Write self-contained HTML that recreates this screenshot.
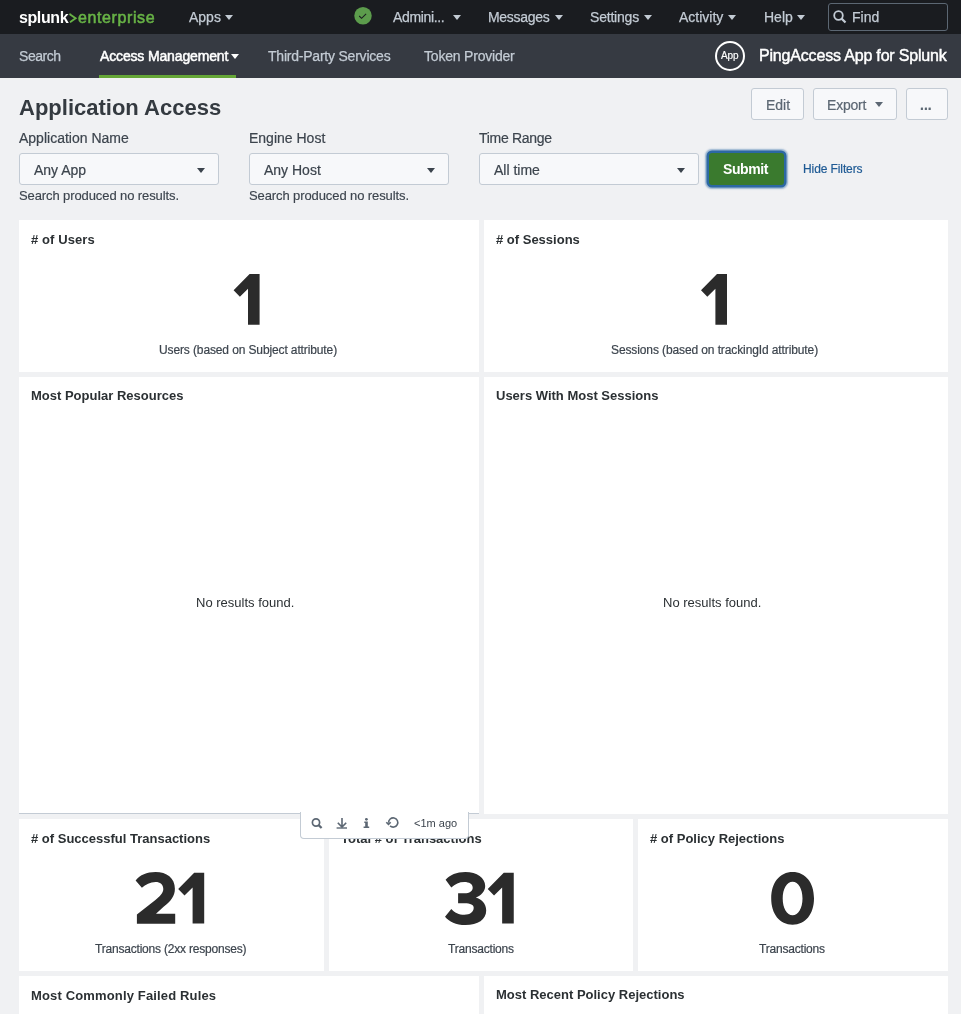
<!DOCTYPE html>
<html><head><meta charset="utf-8">
<style>
html,body{margin:0;padding:0;}
body{width:961px;height:1014px;overflow:hidden;position:relative;background:#f0f1f3;font-family:"Liberation Sans",sans-serif;}
.a{position:absolute;}
.t{position:absolute;line-height:1;white-space:nowrap;}
.t,.ptitle,.cap,.lbl{will-change:transform;}
#top{left:0;top:0;width:961px;height:34px;background:#1a1c20;}
#bar{left:0;top:34px;width:961px;height:44px;background:#363a42;}
.nv{color:#c3cbd4;font-size:14px;-webkit-text-stroke:0.25px #c3cbd4;}
.tri{position:absolute;width:0;height:0;border-left:4px solid transparent;border-right:4px solid transparent;border-top:5px solid #c3cbd4;}
.panel{position:absolute;background:#fff;}
.ptitle{position:absolute;font-weight:bold;font-size:13px;color:#2b3033;line-height:1;white-space:nowrap;}
.cap{position:absolute;font-size:12px;color:#3c444d;line-height:1;white-space:nowrap;-webkit-text-stroke:0.2px #3c444d;}
.btn{position:absolute;box-sizing:border-box;border:1px solid #c3cbd4;border-radius:3px;background:#f7f8fa;}
.dd{position:absolute;box-sizing:border-box;border:1px solid #c3cbd4;border-radius:3px;background:#f7f8fa;}
.lbl{position:absolute;line-height:1;white-space:nowrap;font-size:14px;color:#3c444d;-webkit-text-stroke:0.2px currentColor;}
</style></head><body>
<div id="top" class="a"></div>
<div id="bar" class="a"></div>

<!-- logo -->
<div class="t" style="left:19px;top:10px;font-size:16px;font-weight:bold;color:#fff;letter-spacing:-0.4px;">splunk</div>
<svg class="a" style="left:68px;top:13px;" width="10" height="12" viewBox="0 0 10 12"><path d="M2.2 0.5 L2.2 1.6 L7.6 5.3 L2 9.2" fill="none" stroke="#68b346" stroke-width="1.9"/></svg>
<div class="t" style="left:77.5px;top:10px;font-size:16px;letter-spacing:0.6px;color:#68b346;-webkit-text-stroke:0.55px #68b346;">enterprise</div>

<div class="t nv" style="left:189px;top:10px;">Apps</div>
<div class="tri" style="left:225px;top:15px;"></div>

<svg class="a" style="left:354px;top:7px;" width="18" height="18" viewBox="0 0 18 18"><circle cx="9" cy="8.75" r="8.75" fill="#5c9c4c"/><path d="M5.2 9 L7.6 11.3 L12.1 6.9" fill="none" stroke="#1a1c20" stroke-width="1.05"/></svg>

<div class="t nv" style="left:393px;top:10px;letter-spacing:-0.35px;">Admini...</div>
<div class="tri" style="left:453px;top:15px;"></div>
<div class="t nv" style="left:488px;top:10px;letter-spacing:-0.3px;">Messages</div>
<div class="tri" style="left:555px;top:15px;"></div>
<div class="t nv" style="left:590px;top:10px;letter-spacing:-0.2px;">Settings</div>
<div class="tri" style="left:644px;top:15px;"></div>
<div class="t nv" style="left:679px;top:10px;">Activity</div>
<div class="tri" style="left:728px;top:15px;"></div>
<div class="t nv" style="left:764px;top:10px;">Help</div>
<div class="tri" style="left:797px;top:15px;"></div>

<div class="a" style="left:828px;top:3px;width:118px;height:26px;border:1px solid #5c6773;border-radius:3px;"></div>
<svg class="a" style="left:832px;top:9px;" width="16" height="16" viewBox="0 0 16 16"><circle cx="6.5" cy="6.5" r="4.3" fill="none" stroke="#c3cbd4" stroke-width="1.8"/><path d="M9.6 9.6 L13.5 13.5" stroke="#c3cbd4" stroke-width="2.2"/></svg>
<div class="t nv" style="left:852px;top:10px;">Find</div>

<!-- app bar -->
<div class="t nv" style="left:19px;top:49px;letter-spacing:-0.45px;">Search</div>
<div class="t" style="left:100px;top:49px;font-size:14px;letter-spacing:-0.15px;color:#fff;-webkit-text-stroke:0.5px #fff;">Access Management</div>
<div class="tri" style="left:231px;top:54px;border-top-color:#fff;"></div>
<div class="a" style="left:99px;top:75px;width:137px;height:3px;background:#65a637;"></div>
<div class="t nv" style="left:268px;top:49px;letter-spacing:-0.22px;">Third-Party Services</div>
<div class="t nv" style="left:424px;top:49px;letter-spacing:-0.2px;">Token Provider</div>
<div class="a" style="left:715px;top:41px;width:26px;height:26px;border:2px solid #fff;border-radius:50%;"></div>
<div class="t" style="left:721px;top:50.5px;font-size:10px;letter-spacing:-0.1px;color:#fff;-webkit-text-stroke:0.15px #fff;">App</div>
<div class="t" style="left:759px;top:48px;font-size:16px;letter-spacing:-0.18px;color:#fff;-webkit-text-stroke:0.45px #fff;">PingAccess App for Splunk</div>

<!-- title & filters -->
<div class="t" style="left:19px;top:97px;font-size:22px;font-weight:bold;color:#343a40;">Application Access</div>
<div class="btn" style="left:751px;top:88px;width:53px;height:32px;"></div>
<div class="lbl" style="left:765.5px;top:97.5px;color:#5c6773;-webkit-text-stroke:0.2px #5c6773;">Edit</div>
<div class="btn" style="left:813px;top:88px;width:84px;height:32px;"></div>
<div class="lbl" style="left:827px;top:97.5px;letter-spacing:-0.2px;color:#5c6773;-webkit-text-stroke:0.2px #5c6773;">Export</div>
<div class="tri" style="left:875px;top:102px;border-top-color:#5c6773;"></div>
<div class="btn" style="left:906px;top:88px;width:42px;height:32px;"></div>
<div class="lbl" style="left:920px;top:97.5px;color:#5c6773;font-weight:bold;">...</div>

<div class="lbl" style="left:19px;top:131px;">Application Name</div>
<div class="dd" style="left:19px;top:153px;width:200px;height:32px;"></div>
<div class="lbl" style="left:34px;top:162.5px;">Any App</div>
<div class="tri" style="left:197px;top:167.5px;border-top-color:#3c444d;"></div>
<div class="t" style="left:19px;top:188.5px;font-size:13px;letter-spacing:-0.1px;color:#3c444d;-webkit-text-stroke:0.15px #3c444d;">Search produced no results.</div>

<div class="lbl" style="left:249px;top:131px;">Engine Host</div>
<div class="dd" style="left:249px;top:153px;width:200px;height:32px;"></div>
<div class="lbl" style="left:264px;top:162.5px;">Any Host</div>
<div class="tri" style="left:427px;top:167.5px;border-top-color:#3c444d;"></div>
<div class="t" style="left:249px;top:188.5px;font-size:13px;letter-spacing:-0.1px;color:#3c444d;-webkit-text-stroke:0.15px #3c444d;">Search produced no results.</div>

<div class="lbl" style="left:479px;top:131px;letter-spacing:-0.3px;">Time Range</div>
<div class="dd" style="left:479px;top:153px;width:220px;height:32px;"></div>
<div class="lbl" style="left:494px;top:162.5px;">All time</div>
<div class="tri" style="left:677px;top:167.5px;border-top-color:#3c444d;"></div>

<div class="a" style="left:709px;top:153px;width:75px;height:32px;border-radius:3px;background:#3a7a2e;box-shadow:0 0 0 2.5px #2c68a4,0 0 1.5px 3.5px rgba(44,104,164,0.45);"></div>
<div class="t" style="left:723px;top:162px;font-size:14px;font-weight:bold;letter-spacing:-0.4px;color:#fff;">Submit</div>
<div class="t" style="left:802.5px;top:163px;font-size:12px;letter-spacing:-0.1px;color:#1e5a94;-webkit-text-stroke:0.2px #1e5a94;">Hide Filters</div>

<!-- row 1 -->
<div class="panel" style="left:19px;top:220px;width:460px;height:152px;"></div>
<div class="ptitle" style="left:31px;top:233px;letter-spacing:0.1px;">#&nbsp;of Users</div>
<div class="cap" style="left:159px;top:344px;letter-spacing:-0.12px;">Users (based on Subject attribute)</div>

<div class="panel" style="left:484px;top:220px;width:464px;height:152px;"></div>
<div class="ptitle" style="left:496px;top:233px;">#&nbsp;of Sessions</div>
<div class="cap" style="left:611px;top:344px;letter-spacing:-0.11px;">Sessions (based on trackingId attribute)</div>

<!-- row 2 -->
<div class="panel" style="left:19px;top:377px;width:460px;height:436px;border-bottom:1px solid #c3cbd4;"></div>
<div class="ptitle" style="left:31px;top:389px;">Most Popular Resources</div>
<div class="t" style="left:196px;top:596px;font-size:13px;color:#2b3033;">No results found.</div>

<div class="panel" style="left:484px;top:377px;width:464px;height:437px;"></div>
<div class="ptitle" style="left:496px;top:389px;">Users With Most Sessions</div>
<div class="t" style="left:663px;top:596px;font-size:13px;color:#2b3033;">No results found.</div>

<!-- row 3 -->
<div class="panel" style="left:19px;top:819px;width:305px;height:152px;"></div>
<div class="ptitle" style="left:31px;top:832px;">#&nbsp;of Successful Transactions</div>
<div class="cap" style="left:95px;top:943px;letter-spacing:-0.2px;">Transactions (2xx responses)</div>

<div class="panel" style="left:329px;top:819px;width:304px;height:152px;"></div>
<div class="ptitle" style="left:341px;top:832px;">Total #&nbsp;of Transactions</div>
<div class="cap" style="left:448px;top:943px;letter-spacing:-0.2px;">Transactions</div>

<div class="panel" style="left:638px;top:819px;width:310px;height:152px;"></div>
<div class="ptitle" style="left:650px;top:832px;">#&nbsp;of Policy Rejections</div>
<div class="cap" style="left:758.5px;top:943px;letter-spacing:-0.2px;">Transactions</div>

<!-- row 4 -->
<div class="panel" style="left:19px;top:976px;width:460px;height:40px;"></div>
<div class="ptitle" style="left:31px;top:989px;letter-spacing:0.15px;">Most Commonly Failed Rules</div>
<div class="panel" style="left:484px;top:976px;width:464px;height:40px;"></div>
<div class="ptitle" style="left:496px;top:988px;">Most Recent Policy Rejections</div>

<!-- big digits -->
<svg class="a" style="left:0;top:0;" width="961" height="1014" viewBox="0 0 961 1014">
<g fill="#2b2b2b">
<path transform="translate(233.6,274)" d="M16,0 H26 V50.8 H14.4 V14.8 L6.3,22.7 L0,16.2 Z"/>
<path transform="translate(701,274)" d="M16,0 H26 V50.8 H14.4 V14.8 L6.3,22.7 L0,16.2 Z"/>
<path transform="translate(135.6,872)" d="M0,8.4 C4.5,3 11,0 20,0 C31,0 39.3,6 39.3,16.7 C39.3,24 35,29.5 28,34.8 L20.4,41.8 H39.6 V51.65 H1.3 V42.4 L19.5,28.2 C24.5,24.2 27.7,20.8 27.7,17 C27.7,12.5 24.5,10 20,10 C14.5,10 10,12.5 6.3,15.8 Z"/>
<path transform="translate(178.2,872.7)" d="M16,0 H26 V50.8 H14.4 V14.8 L6.3,22.7 L0,16.2 Z"/>
<path transform="translate(445,872)" d="M0.6,7.8 C5,3 11.5,0 20.4,0 C32,0 40.2,6 40.2,14 C40.2,19.5 36,23.5 30.8,25.5 C36.5,27.2 41.2,31.5 41.2,38.5 C41.2,47.5 33,53 20.4,53 C11,53 4,49.5 0,44.7 L6.3,36.9 C9.5,40.5 14,42.8 19.3,42.8 C25,42.8 28.7,40 28.7,35.8 C28.7,32.8 25.5,31.2 19.5,31.2 H13.1 V21.3 H19.5 C24.5,21.3 27.7,19.2 27.7,15.7 C27.7,12 24.3,9.9 19.3,9.9 C14.3,9.9 10,11.8 6.3,15.6 Z"/>
<path transform="translate(487.75,872.7)" d="M16,0 H26 V50.8 H14.4 V14.8 L6.3,22.7 L0,16.2 Z"/>
<path fill-rule="evenodd" d="M792.6,871.9 C805.44,871.9 814,882.48 814,898.35 C814,914.22 805.44,924.8 792.6,924.8 C779.76,924.8 771.2,914.22 771.2,898.35 C771.2,882.48 779.76,871.9 792.6,871.9 Z M792.6,881.8 C798.34,881.8 802.5,888.81 802.5,898.5 C802.5,908.19 798.34,915.2 792.6,915.2 C786.86,915.2 782.7,908.19 782.7,898.5 C782.7,888.81 786.86,881.8 792.6,881.8 Z"/>
</g>
</svg>

<!-- toolbar -->
<div class="a" style="left:300px;top:812px;width:167px;height:26px;background:#fff;border:1px solid #c3cbd4;border-top:none;border-radius:0 0 4px 4px;"></div>
<svg class="a" style="left:300px;top:812px;" width="110" height="26" viewBox="0 0 110 26">
<g fill="none" stroke="#5c6773">
<circle cx="16" cy="10.5" r="3.6" stroke-width="1.7"/>
<path d="M18.6 13.1 L21.6 16" stroke-width="2.2"/>
<path d="M42 6 V14.8 M37.8 10.8 L42 15 L46.2 10.8" stroke-width="1.6"/>
<path d="M36.6 16 H47" stroke-width="1.4"/>
<path d="M397.5 0" />
</g>
<g fill="#5c6773">
<circle cx="66.4" cy="7.3" r="1.4"/>
<path d="M64.3 9.6 H67.8 V14.6 H69.2 V16 H63.6 V14.6 H65.2 V11 H64.3 Z"/>
</g>
<g fill="none" stroke="#5c6773" stroke-width="1.6">
<path d="M88.6 10.8 A4.6 4.6 0 1 1 90.06 13.86"/>
<path d="M86.3 10.2 L88.5 12.4 L90.7 10.2"/>
</g>
</svg>
<div class="t" style="left:414px;top:817.5px;font-size:11px;color:#3c444d;">&lt;1m ago</div>

</body></html>
